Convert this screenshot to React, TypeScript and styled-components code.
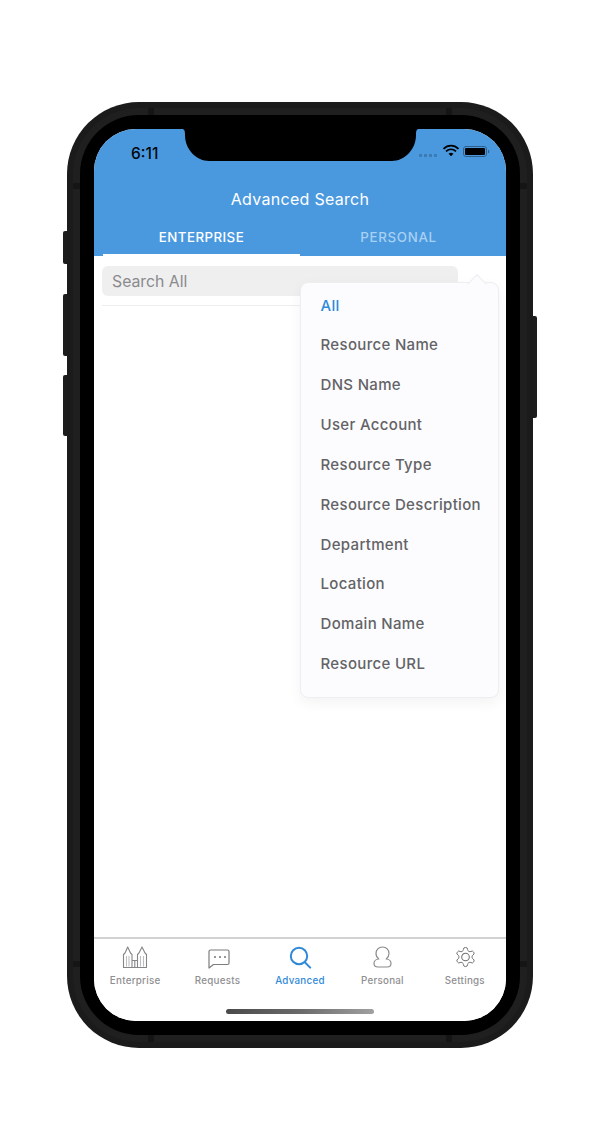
import React from "react";
import styled, { createGlobalStyle } from "styled-components";

const Global = createGlobalStyle`
  html, body { margin: 0; padding: 0; background: #fff; }
  body { font-family: Inter, "Liberation Sans", sans-serif; }
`;

const Page = styled.div`
  width: 600px;
  height: 1124px;
  padding-top: 102px;
  box-sizing: border-box;
  overflow: hidden;
  display: flex;
  justify-content: center;
  align-items: flex-start;
`;

const Rail = styled.div<{ $pad: number }>`
  flex: none;
  width: 4px;
  display: flex;
  flex-direction: column;
  padding-top: ${(p) => p.$pad}px;
`;

const SideButton = styled.div<{ $side: "left" | "right"; $h: number; $gap?: number }>`
  width: 4px;
  height: ${(p) => p.$h}px;
  margin-top: ${(p) => p.$gap ?? 0}px;
  background: #1c1c1c;
  border-radius: ${(p) => (p.$side === "left" ? "2px 0 0 2px" : "0 2px 2px 0")};
`;

const band = "linear-gradient(#151515, #151515)";

const Phone = styled.div`
  flex: none;
  width: 466px;
  height: 946px;
  box-sizing: border-box;
  padding: 13px;
  border-radius: 72px;
  box-shadow: inset 0 0 0 6px #1b1b1b;
  background:
    ${band} 81px 0 / 6px 13px no-repeat,
    ${band} 379px 0 / 6px 13px no-repeat,
    ${band} 81px 100% / 6px 13px no-repeat,
    ${band} 379px 100% / 6px 13px no-repeat,
    ${band} 0 81px / 13px 6px no-repeat,
    ${band} 100% 81px / 13px 6px no-repeat,
    ${band} 0 859px / 13px 6px no-repeat,
    ${band} 100% 859px / 13px 6px no-repeat,
    #1f1f1f;
`;

const Bezel = styled.div`
  height: 100%;
  box-sizing: border-box;
  padding: 14px;
  background: #000;
  border-radius: 59px;
`;

const Screen = styled.div`
  position: relative;
  height: 100%;
  display: flex;
  flex-direction: column;
  background: #fff;
  border-radius: 42px;
  overflow: hidden;
`;

const Notch = styled.svg`
  position: absolute;
  left: 88px;
  top: 0;
  width: 237px;
  height: 33px;
`;

const Header = styled.header`
  background: #4a99df;
  height: 127px;
  display: flex;
  flex-direction: column;
  flex: none;
`;

const StatusBar = styled.div`
  height: 38px;
  display: flex;
  align-items: flex-end;
  justify-content: space-between;
  padding: 0 11px 0 37px;
`;

const Time = styled.span`
  font: 500 15.5px/20px Inter, sans-serif;
  color: #04070a;
  margin-bottom: 1px;
`;

const StatusIcons = styled.svg`
  width: 76px;
  height: 14px;
  margin-bottom: 7px;
`;

const Title = styled.h1`
  margin: 24px 0 0;
  text-align: center;
  font: 400 16px/20px Inter, sans-serif;
  letter-spacing: 0.3px;
  color: #fff;
`;

const Tabs = styled.div`
  display: flex;
  padding: 0 9px;
  margin-top: 17px;
`;

const Tab = styled.div<{ $active?: boolean }>`
  flex: 0 0 197px;
  height: 30px;
  box-sizing: border-box;
  padding-top: 2px;
  text-align: center;
  font: 500 13.3px/18px Inter, sans-serif;
  letter-spacing: ${(p) => (p.$active ? "0.45px" : "0.7px")};
  color: ${(p) => (p.$active ? "#fff" : "#a8d0f2")};
  border-bottom: 2px solid ${(p) => (p.$active ? "#fff" : "transparent")};
`;

const Content = styled.main`
  position: relative;
  flex: 1;
  padding: 10px 8px 0;
`;

const SearchBox = styled.div`
  width: 356px;
  height: 30px;
  box-sizing: border-box;
  padding-left: 10px;
  background: #efefef;
  border-radius: 6px;
  font: 400 15.8px/31px Inter, sans-serif;
  color: #8a8a8e;
`;

const Divider = styled.div`
  margin-top: 9px;
  height: 1px;
  background: #eeeeee;
  width: 396px;
`;

const Menu = styled.ul`
  position: absolute;
  left: 206px;
  top: 26px;
  width: 199px;
  height: 416px;
  margin: 0;
  padding: 2.6px 0 0 19.5px;
  box-sizing: border-box;
  list-style: none;
  background: #fcfcfe;
  border: 1px solid #eeeef1;
  border-radius: 8px;
  box-shadow: 0 5px 14px rgba(0, 0, 0, 0.05);
`;

const Arrow = styled.div`
  position: absolute;
  left: 169px;
  top: -6px;
  width: 13px;
  height: 13px;
  background: #fcfcfe;
  border-left: 1px solid #eeeef1;
  border-top: 1px solid #eeeef1;
  transform: rotate(45deg);
`;

const MenuItem = styled.li<{ $active?: boolean }>`
  height: 39.85px;
  display: flex;
  align-items: center;
  font: 500 15px/20px Inter, sans-serif;
  letter-spacing: 0.33px;
  white-space: nowrap;
  color: ${(p) => (p.$active ? "#2f89d8" : "#636366")};
`;

const TabBar = styled.nav`
  flex: none;
  height: 84px;
  box-sizing: border-box;
  border-top: 2px solid #d2d2d2;
  display: flex;
  flex-direction: column;
  align-items: center;
  padding-bottom: 7px;
  background: #fff;
`;

const TabRow = styled.div`
  align-self: stretch;
  display: grid;
  grid-template-columns: repeat(5, 1fr);
`;

const TabItem = styled.div<{ $active?: boolean }>`
  display: flex;
  flex-direction: column;
  align-items: center;
  padding-top: 7px;
  color: ${(p) => (p.$active ? "#2f89d8" : "#8f8f91")};
`;

const TabIcon = styled.svg`
  width: 26px;
  height: 24px;
  display: block;
`;

const TabLabel = styled.span`
  margin-top: 4px;
  font: 500 9.8px/14px Inter, sans-serif;
  letter-spacing: 0.25px;
`;

const HomeIndicator = styled.div`
  margin-top: auto;
  width: 148px;
  height: 5px;
  border-radius: 3px;
  background: linear-gradient(90deg, #4a4a4a, #6a6a6a 50%, #a0a0a0);
`;

const items = [
  "All",
  "Resource Name",
  "DNS Name",
  "User Account",
  "Resource Type",
  "Resource Description",
  "Department",
  "Location",
  "Domain Name",
  "Resource URL",
];

const EnterpriseIcon = () => (
  <TabIcon viewBox="0 0 26 24" fill="none" stroke="#858587" strokeWidth="1.1">
    <path d="M1.5 21.5V8.5L3 7 5.7 1 8.5 7 10 8.5V21.5H1.5Z" strokeLinejoin="round" />
    <path d="M15.5 21.5V8.5L17 7 20 1 23 7 24.5 8.5V21.5H15.5Z" strokeLinejoin="round" />
    <path d="M10 14.5H15.5M12.8 14.5V21.5M10 21.5H15.5" />
    <path d="M4.5 10V20.5M7 10V20.5M18.5 10V20.5M21.5 10V20.5" stroke="#bdbdbd" />
  </TabIcon>
);

const RequestsIcon = () => (
  <TabIcon viewBox="0 0 26 24" fill="none" stroke="#7d7d7f" strokeWidth="1.2">
    <path d="M5.5 4H22.5A1.5 1.5 0 0 1 24 5.5V17A1.5 1.5 0 0 1 22.5 18.5H8.5L4 22V5.5A1.5 1.5 0 0 1 5.5 4Z" strokeLinejoin="round" />
    <circle cx="10" cy="11" r="1.1" fill="#7d7d7f" stroke="none" />
    <circle cx="15" cy="11" r="1.1" fill="#7d7d7f" stroke="none" />
    <circle cx="20" cy="11" r="1.1" fill="#7d7d7f" stroke="none" />
  </TabIcon>
);

const AdvancedIcon = () => (
  <TabIcon viewBox="0 0 26 24" fill="none" stroke="#2f89d8" strokeWidth="2">
    <circle cx="12" cy="10" r="8.2" />
    <path d="M17.8 16.2L23.2 21.6" strokeLinecap="round" />
  </TabIcon>
);

const PersonalIcon = () => (
  <TabIcon viewBox="0 0 26 24" fill="none" stroke="#8b8b8d" strokeWidth="1.2">
    <path
      d="M13.5 1C9.6 1 7 3.8 7 7.5 7 9.8 8.2 11.8 9.8 13 7 13.2 5 15.2 5 17.2 5 19.6 6.8 21 9 21H18C20.2 21 22 19.6 22 17.2 22 15.2 20 13.2 17.2 13 18.8 11.8 20 9.8 20 7.5 20 3.8 17.4 1 13.5 1Z"
      strokeLinejoin="round"
    />
  </TabIcon>
);

const SettingsIcon = () => (
  <TabIcon viewBox="0 0 26 24" fill="none" stroke="#6f6f72" strokeWidth="1.05">
    <path
      transform="translate(2.1 -0.4) scale(0.95)"
      d="M12.22 2h-.44a2 2 0 0 0-2 2v.18a2 2 0 0 1-1 1.73l-.43.25a2 2 0 0 1-2 0l-.15-.08a2 2 0 0 0-2.73.73l-.22.38a2 2 0 0 0 .73 2.73l.15.1a2 2 0 0 1 1 1.72v.51a2 2 0 0 1-1 1.74l-.15.09a2 2 0 0 0-.73 2.73l.22.38a2 2 0 0 0 2.73.73l.15-.08a2 2 0 0 1 2 0l.43.25a2 2 0 0 1 1 1.73V20a2 2 0 0 0 2 2h.44a2 2 0 0 0 2-2v-.18a2 2 0 0 1 1-1.73l.43-.25a2 2 0 0 1 2 0l.15.08a2 2 0 0 0 2.73-.73l.22-.39a2 2 0 0 0-.73-2.73l-.15-.08a2 2 0 0 1-1-1.74v-.5a2 2 0 0 1 1-1.74l.15-.09a2 2 0 0 0 .73-2.73l-.22-.38a2 2 0 0 0-2.73-.73l-.15.08a2 2 0 0 1-2 0l-.43-.25a2 2 0 0 1-1-1.73V4a2 2 0 0 0-2-2z"
    />
    <circle cx="13.5" cy="11" r="3.8" />
  </TabIcon>
);

const bottomTabs = [
  { label: "Enterprise", Icon: EnterpriseIcon },
  { label: "Requests", Icon: RequestsIcon },
  { label: "Advanced", Icon: AdvancedIcon, active: true },
  { label: "Personal", Icon: PersonalIcon },
  { label: "Settings", Icon: SettingsIcon },
];

export default function App() {
  return (
    <Page>
      <Global />
      <Rail $pad={129}>
        <SideButton $side="left" $h={33} />
        <SideButton $side="left" $h={62} $gap={30} />
        <SideButton $side="left" $h={61} $gap={19} />
      </Rail>
      <Phone>
        <Bezel>
          <Screen>
            <Header>
              <StatusBar>
                <Time>6:11</Time>
                <StatusIcons viewBox="0 0 76 14">
                  <g fill="#3b79b0">
                    <rect x="0" y="10" width="3" height="3" rx="0.8" />
                    <rect x="5" y="10" width="3" height="3" rx="0.8" />
                    <rect x="10" y="10" width="3" height="3" rx="0.8" />
                    <rect x="15" y="10" width="3" height="3" rx="0.8" />
                  </g>
                  <path d="M24.5 4.8C29 .6 35 .6 39.5 4.8" fill="none" stroke="#000" strokeWidth="1.7" />
                  <path d="M27 7.4C30 4.6 34 4.6 37 7.4" fill="none" stroke="#000" strokeWidth="1.7" />
                  <path d="M29.6 9.8C31 8.4 33 8.4 34.4 9.8L32 12.2Z" fill="#000" />
                  <rect x="44.5" y="2.5" width="23" height="10" rx="2.5" fill="none" stroke="#2f5f8c" strokeWidth="1" />
                  <rect x="46" y="4" width="20" height="7" rx="1.3" fill="#000" />
                  <rect x="69" y="6" width="1.2" height="3" rx="0.5" fill="#2f5f8c" />
                </StatusIcons>
              </StatusBar>
              <Title>Advanced Search</Title>
              <Tabs>
                <Tab $active>ENTERPRISE</Tab>
                <Tab>PERSONAL</Tab>
              </Tabs>
            </Header>
            <Notch viewBox="0 0 237 33">
              <path d="M0 0H237C234.5 0 234 2 234 6 234 21 222 32 210 32H27C15 32 3 21 3 6 3 2 2.5 0 0 0Z" fill="#000" />
            </Notch>
            <Content>
              <SearchBox>Search All</SearchBox>
              <Divider />
              <Menu>
                <Arrow />
                {items.map((item, i) => (
                  <MenuItem key={item} $active={i === 0}>
                    {item}
                  </MenuItem>
                ))}
              </Menu>
            </Content>
            <TabBar>
              <TabRow>
                {bottomTabs.map(({ label, Icon, active }) => (
                  <TabItem key={label} $active={active}>
                    <Icon />
                    <TabLabel>{label}</TabLabel>
                  </TabItem>
                ))}
              </TabRow>
              <HomeIndicator />
            </TabBar>
          </Screen>
        </Bezel>
      </Phone>
      <Rail $pad={214}>
        <SideButton $side="right" $h={102} />
      </Rail>
    </Page>
  );
}
